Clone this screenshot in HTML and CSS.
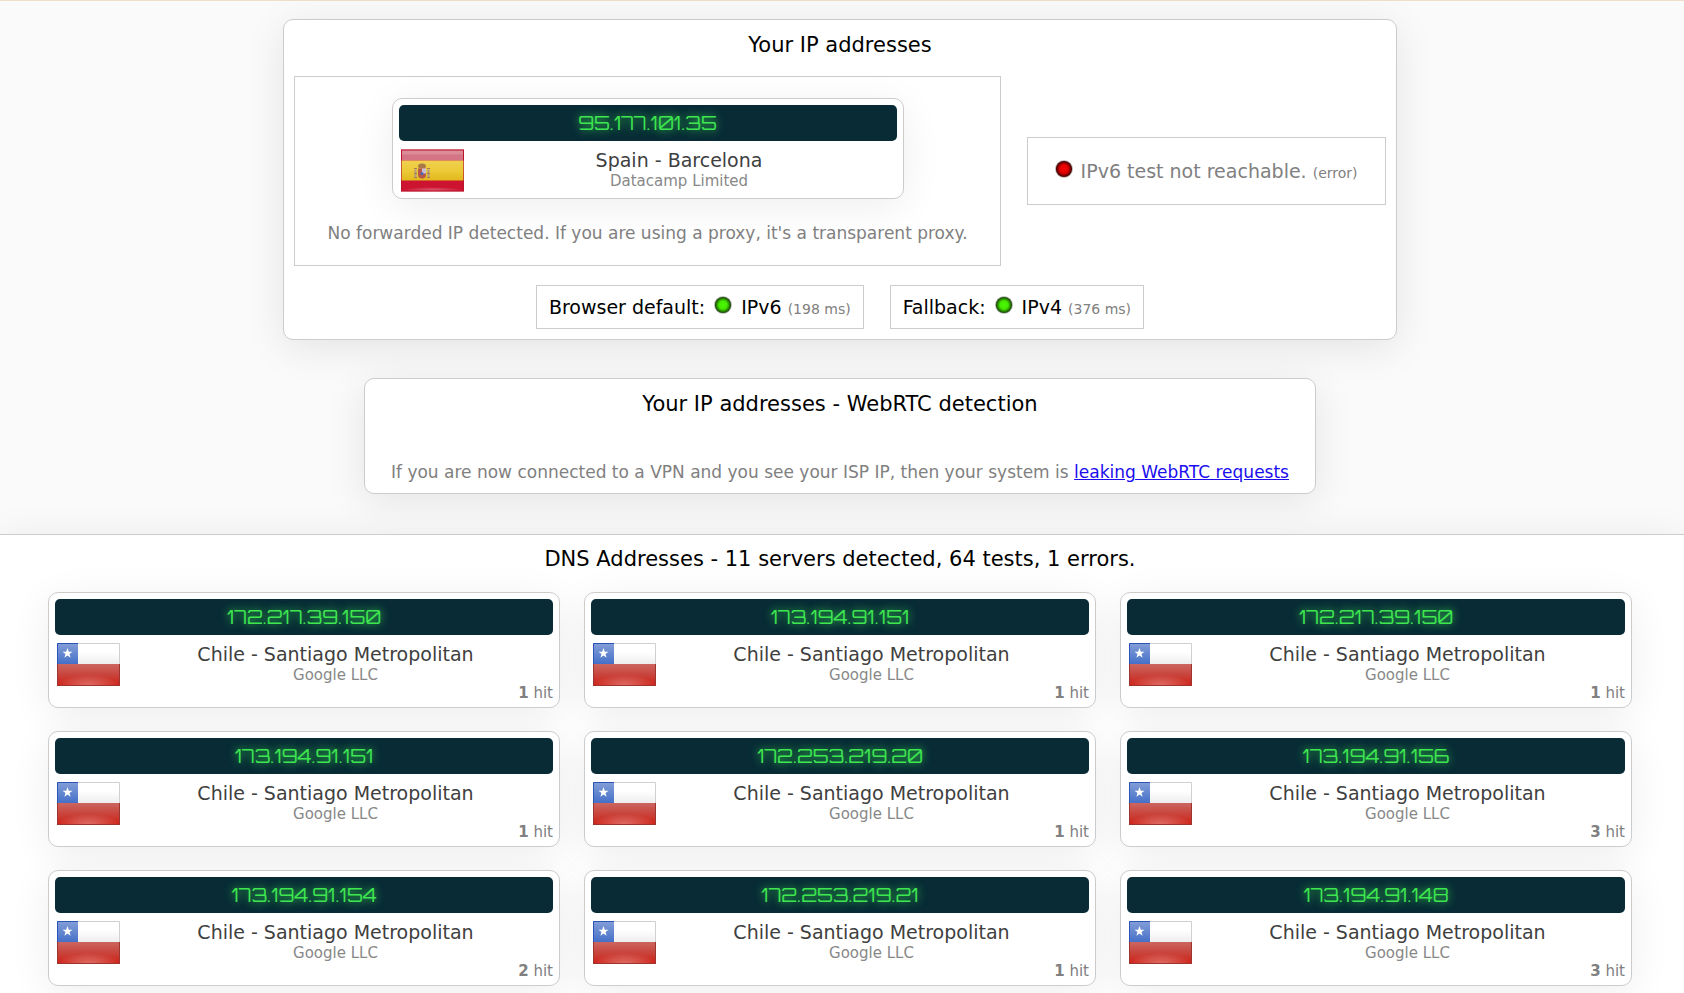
FILE: index.html
```html
<!DOCTYPE html>
<html lang="en">
<head>
    <meta charset="UTF-8">
    <meta name="viewport" content="width=device-width, initial-scale=1.0">
    <title>IP and DNS addresses</title>
    <link rel="stylesheet" href="styles.css">
</head>
<body>
    <!-- Shared drawings -->
    <svg class="defs" width="0" height="0" aria-hidden="true">
        <defs>
            <radialGradient id="glow" cx="0.5" cy="1" r="0.5">
                <stop offset="0" stop-color="#fff" stop-opacity="0.35"/>
                <stop offset="1" stop-color="#fff" stop-opacity="0"/>
            </radialGradient>
            <linearGradient id="red" x1="0" y1="0" x2="0" y2="1">
                <stop offset="0" stop-color="#cc6660"/>
                <stop offset="0.45" stop-color="#c8473f"/>
                <stop offset="1" stop-color="#d01f14"/>
            </linearGradient>
            <linearGradient id="blue" x1="0" y1="0" x2="0" y2="1">
                <stop offset="0" stop-color="#859fd8"/>
                <stop offset="1" stop-color="#4570c8"/>
            </linearGradient>
            <linearGradient id="white" x1="0" y1="0" x2="0" y2="1">
                <stop offset="0.4" stop-color="#fff"/>
                <stop offset="1" stop-color="#ececec"/>
            </linearGradient>
            <linearGradient id="yellow" x1="0" y1="0" x2="0" y2="1">
                <stop offset="0" stop-color="#f0d050"/>
                <stop offset="0.5" stop-color="#ecca38"/>
                <stop offset="1" stop-color="#e2b81c"/>
            </linearGradient>
            <radialGradient id="led-red">
                <stop offset="0" stop-color="#f40000"/>
                <stop offset="0.5" stop-color="#e60000"/>
                <stop offset="1" stop-color="#3a0000"/>
            </radialGradient>
            <radialGradient id="led-green">
                <stop offset="0" stop-color="#4cf800"/>
                <stop offset="0.5" stop-color="#44ea00"/>
                <stop offset="1" stop-color="#143a04"/>
            </radialGradient>
            <symbol id="flag-es" viewBox="0 0 63 42">
                <rect width="63" height="42" fill="#cc1430"/>
                <rect x="1" y="1" width="61" height="10" fill="#d47484"/>
                <rect x="1" y="1" width="61" height="4" fill="#dc8c98"/>
                <rect y="11" width="63" height="20" fill="url(#yellow)"/>
                <rect x="1" y="34" width="61" height="7" fill="url(#glow)"/>
                <path d="M14.500 20v8M27.500 20v8" stroke="#b09c80" stroke-width="2"/>
                <path d="M13 19h3M26 19h3M13 28h3M26 28h3M13 24h3M26 24h3" stroke="#b07858"/>
                <path d="M17 17q0-3 4-3t4 3l-1 2h-6z" fill="#a87848"/>
                <path d="M17 19h8v6q0 4-4 4t-4-4z" fill="#b85848"/>
                <path d="M21 19h4v5h-4z" fill="#c8c0d8"/>
                <circle cx="21" cy="24" r="1.500" fill="#5068b8"/>
                <rect x=".5" y=".5" width="62" height="41" fill="none" stroke="#b01028" stroke-opacity=".6"/>
            </symbol>
            <symbol id="flag-cl" viewBox="0 0 63 43">
                <rect width="63" height="22" fill="url(#white)"/>
                <rect y="21" width="63" height="22" fill="url(#red)"/>
                <rect y="21" width="63" height="22" fill="url(#glow)"/>
                <rect width="21" height="21" fill="url(#blue)"/>
                <path d="M10.500 5l1.300 3.700 3.700.1-3 2.300 1.100 3.700-3.100-2.200-3.100 2.200 1.100-3.700-3-2.300 3.700-.1z" fill="#fff"/>
                <path d="M21 .5h41.500V21" fill="none" stroke="#d0d0d0"/>
                <path d="M.5 21V.5H21" fill="none" stroke="#2c54b8"/>
                <path d="M.5 21v21.500h62V21" fill="none" stroke="#9c3430"/>
            </symbol>
            <symbol id="dot-red" viewBox="0 0 20 20">
                <circle cx="10" cy="10" r="10" fill="#000" fill-opacity="0.25"/>
                <circle cx="10" cy="10" r="9" fill="url(#led-red)"/>
            </symbol>
            <symbol id="dot-green" viewBox="0 0 20 20">
                <circle cx="10" cy="10" r="10" fill="#000" fill-opacity="0.25"/>
                <circle cx="10" cy="10" r="9" fill="url(#led-green)"/>
            </symbol>
        </defs>
    </svg>

    <main>
        <section class="detect">
            <div class="panel">
                <h2>Your IP addresses</h2>
                <div class="protocols">
                    <div class="box">
                        <div class="ip">
                            <div class="address">95.177.101.35</div>
                            <div class="details">
                                <svg class="flag" role="img" aria-label="Spain"><use href="#flag-es"/></svg>
                                <div class="where">
                                    <div class="place">Spain - Barcelona</div>
                                    <div class="provider">Datacamp Limited</div>
                                </div>
                            </div>
                        </div>
                        <p class="note">No forwarded IP detected. If you are using a proxy, it's a transparent proxy.</p>
                    </div>
                    <div class="box unreachable">
                        <svg class="dot" aria-hidden="true"><use href="#dot-red"/></svg>
                        <span>IPv6 test not reachable. <small>(error)</small></span>
                    </div>
                </div>
                <div class="modes">
                    <div class="mode">
                        <span>Browser default:</span>
                        <svg class="dot" aria-hidden="true"><use href="#dot-green"/></svg>
                        <span>IPv6 <small>(198 ms)</small></span>
                    </div>
                    <div class="mode">
                        <span>Fallback:</span>
                        <svg class="dot" aria-hidden="true"><use href="#dot-green"/></svg>
                        <span>IPv4 <small>(376 ms)</small></span>
                    </div>
                </div>
            </div>

            <div class="panel">
                <h2>Your IP addresses - WebRTC detection</h2>
                <p class="note webrtc">If you are now connected to a VPN and you see your ISP IP, then your system is <a href="#webrtc">leaking WebRTC requests</a></p>
            </div>
        </section>

        <section class="dns">
            <h2>DNS Addresses - 11 servers detected, 64 tests, 1 errors.</h2>
            <div class="servers">
                <div class="ip">
                    <div class="address">172.217.39.150</div>
                    <div class="details">
                        <svg class="flag" role="img" aria-label="Chile"><use href="#flag-cl"/></svg>
                        <div class="where">
                            <div class="place">Chile - Santiago Metropolitan</div>
                            <div class="provider">Google LLC</div>
                        </div>
                    </div>
                    <div class="hits"><b>1</b> hit</div>
                </div>
                <div class="ip">
                    <div class="address">173.194.91.151</div>
                    <div class="details">
                        <svg class="flag" role="img" aria-label="Chile"><use href="#flag-cl"/></svg>
                        <div class="where">
                            <div class="place">Chile - Santiago Metropolitan</div>
                            <div class="provider">Google LLC</div>
                        </div>
                    </div>
                    <div class="hits"><b>1</b> hit</div>
                </div>
                <div class="ip">
                    <div class="address">172.217.39.150</div>
                    <div class="details">
                        <svg class="flag" role="img" aria-label="Chile"><use href="#flag-cl"/></svg>
                        <div class="where">
                            <div class="place">Chile - Santiago Metropolitan</div>
                            <div class="provider">Google LLC</div>
                        </div>
                    </div>
                    <div class="hits"><b>1</b> hit</div>
                </div>
                <div class="ip">
                    <div class="address">173.194.91.151</div>
                    <div class="details">
                        <svg class="flag" role="img" aria-label="Chile"><use href="#flag-cl"/></svg>
                        <div class="where">
                            <div class="place">Chile - Santiago Metropolitan</div>
                            <div class="provider">Google LLC</div>
                        </div>
                    </div>
                    <div class="hits"><b>1</b> hit</div>
                </div>
                <div class="ip">
                    <div class="address">172.253.219.20</div>
                    <div class="details">
                        <svg class="flag" role="img" aria-label="Chile"><use href="#flag-cl"/></svg>
                        <div class="where">
                            <div class="place">Chile - Santiago Metropolitan</div>
                            <div class="provider">Google LLC</div>
                        </div>
                    </div>
                    <div class="hits"><b>1</b> hit</div>
                </div>
                <div class="ip">
                    <div class="address">173.194.91.156</div>
                    <div class="details">
                        <svg class="flag" role="img" aria-label="Chile"><use href="#flag-cl"/></svg>
                        <div class="where">
                            <div class="place">Chile - Santiago Metropolitan</div>
                            <div class="provider">Google LLC</div>
                        </div>
                    </div>
                    <div class="hits"><b>3</b> hit</div>
                </div>
                <div class="ip">
                    <div class="address">173.194.91.154</div>
                    <div class="details">
                        <svg class="flag" role="img" aria-label="Chile"><use href="#flag-cl"/></svg>
                        <div class="where">
                            <div class="place">Chile - Santiago Metropolitan</div>
                            <div class="provider">Google LLC</div>
                        </div>
                    </div>
                    <div class="hits"><b>2</b> hit</div>
                </div>
                <div class="ip">
                    <div class="address">172.253.219.21</div>
                    <div class="details">
                        <svg class="flag" role="img" aria-label="Chile"><use href="#flag-cl"/></svg>
                        <div class="where">
                            <div class="place">Chile - Santiago Metropolitan</div>
                            <div class="provider">Google LLC</div>
                        </div>
                    </div>
                    <div class="hits"><b>1</b> hit</div>
                </div>
                <div class="ip">
                    <div class="address">173.194.91.148</div>
                    <div class="details">
                        <svg class="flag" role="img" aria-label="Chile"><use href="#flag-cl"/></svg>
                        <div class="where">
                            <div class="place">Chile - Santiago Metropolitan</div>
                            <div class="provider">Google LLC</div>
                        </div>
                    </div>
                    <div class="hits"><b>3</b> hit</div>
                </div>
            </div>
        </section>
    </main>
</body>
</html>
```

FILE: styles.css
```css
* {
    box-sizing: border-box;
}
body {
    margin: 0;
    background: #fafafa;
    color: #000;
    font-family: Verdana, "DejaVu Sans", sans-serif;
    font-size: 19px;
}
.defs {
    position: absolute;
}
h2 {
    margin: 0;
    font-size: 21px;
    line-height: 30px;
    font-weight: normal;
    text-align: center;
}
small {
    font-size: 14px;
    line-height: 14px;
    color: #808080;
}
.detect {
    display: flex;
    flex-direction: column;
    align-items: center;
    gap: 38px;
    padding: 18px 4px 40px 0;
    border-top: 1px solid #eee0c8;
}
.panel {
    padding: 10px;
    background: #fff;
    border: 1px solid #ccc;
    border-radius: 10px;
    box-shadow: 0 8px 40px rgba(0, 0, 0, 0.09);
}
.protocols {
    display: flex;
    align-items: center;
    gap: 26px;
    margin-top: 16px;
}
.box {
    padding: 21px 32px;
    border: 1px solid #ccc;
}
.unreachable {
    display: flex;
    align-items: center;
    gap: 8px;
    padding: 21px 27px;
    line-height: 24px;
    color: #808080;
}
.note {
    margin: 23px 0 0;
    font-size: 17px;
    line-height: 22px;
    color: #808080;
    text-align: center;
}
.webrtc {
    margin-top: 42px;
    padding: 0 16px;
}
.note a {
    color: #1a0dee;
}
.modes {
    display: flex;
    justify-content: center;
    gap: 26px;
    margin-top: 19px;
}
.mode {
    display: flex;
    align-items: center;
    gap: 9px;
    padding: 9px 12px;
    border: 1px solid #ccc;
    line-height: 24px;
}
.dot {
    width: 18px;
    height: 18px;
    margin-bottom: 4px;
}

/* Address card */
.ip {
    width: 100%;
    max-width: 512px;
    margin: 0 auto;
    padding: 6px;
    background: #fff;
    border: 1px solid #ccc;
    border-radius: 10px;
    box-shadow: 0 8px 40px rgba(0, 0, 0, 0.07);
}
.address {
    background: #082b36;
    border-radius: 5px;
    color: #3ee650;
    font-family: Orbitron, "DejaVu Sans", sans-serif;
    font-size: 19px;
    font-weight: 400;
    line-height: 36px;
    text-align: center;
    text-shadow: 0 0 8px #3ee650;
}
.details {
    display: flex;
    padding: 8px 2px 0;
}
.flag {
    flex: none;
    width: 63px;
    height: 43px;
}
.where {
    flex: 1;
    text-align: center;
}
.place {
    color: #404040;
    line-height: 22px;
}
.provider {
    font-size: 15px;
    line-height: 20px;
    color: #888;
}
.hits {
    font-size: 15px;
    line-height: 15px;
    color: #808080;
    text-align: right;
}

/* DNS servers */
.dns {
    padding: 9px 4px 24px 0;
    background: #fff;
    border-top: 1px solid #ccc;
    box-shadow: 0 8px 40px rgba(0, 0, 0, 0.09);
}
.servers {
    display: flex;
    flex-wrap: wrap;
    justify-content: center;
    gap: 23px 24px;
    margin-top: 18px;
}
.servers .ip {
    margin: 0;
}
```
